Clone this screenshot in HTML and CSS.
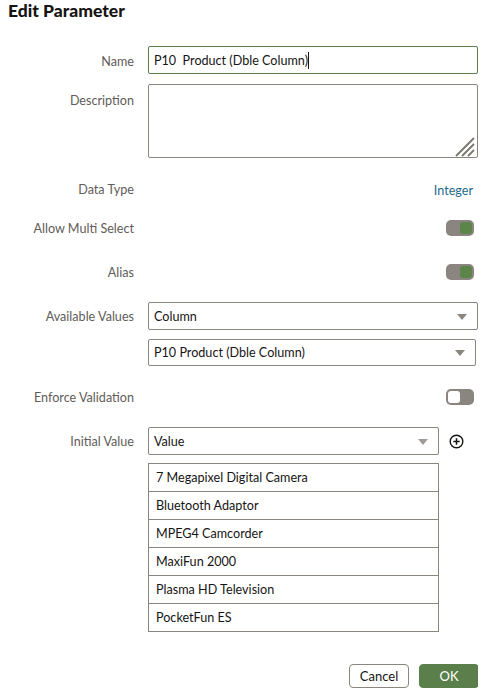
FILE: index.html
```html
<!DOCTYPE html>
<html lang="en">
<head>
<meta charset="utf-8">
<title>Edit Parameter</title>
<link rel="stylesheet" href="styles.css">
</head>
<body>
<h1 class="title">Edit Parameter</h1>
<div class="form">
  <div class="row row-name">
    <div class="lbl lbl-name">Name</div>
    <div class="input focused"><span class="txt">P10  Product (Dble Column)</span><span class="caret"></span></div>
  </div>
  <div class="row row-desc">
    <div class="lbl lbl-top">Description</div>
    <div class="textarea">
      <svg class="grip" width="22" height="22" viewBox="0 0 22 22">
        <path d="M21 3 L3 21 M21 9 L9 21 M21 15 L15 21" stroke="#7a756f" stroke-width="1.8" fill="none"/>
      </svg>
    </div>
  </div>
  <div class="row row-type">
    <div class="lbl">Data Type</div>
    <div class="static">Integer</div>
  </div>
  <div class="row row-multi">
    <div class="lbl">Allow Multi Select</div>
    <div class="switch on"><span class="knob"></span></div>
  </div>
  <div class="row row-alias">
    <div class="lbl">Alias</div>
    <div class="switch on"><span class="knob"></span></div>
  </div>
  <div class="row row-avail">
    <div class="lbl">Available Values</div>
    <div class="select"><span class="txt">Column</span><span class="arrow"></span></div>
  </div>
  <div class="row row-avail2">
    <div class="lbl"></div>
    <div class="select select-short"><span class="txt">P10 Product (Dble Column)</span><span class="arrow"></span></div>
  </div>
  <div class="row row-enforce">
    <div class="lbl">Enforce Validation</div>
    <div class="switch off"><span class="knob"></span></div>
  </div>
  <div class="row row-initial">
    <div class="lbl">Initial Value</div>
    <div class="initial-wrap">
      <div class="select select-init"><span class="txt">Value</span><span class="arrow"></span></div>
      <svg class="plus" width="15" height="15" viewBox="0 0 15 15">
        <circle cx="7.5" cy="7.5" r="6.3" stroke="#161513" stroke-width="1.4" fill="none"/>
        <path d="M7.5 4.3 V10.7 M4.3 7.5 H10.7" stroke="#161513" stroke-width="1.5"/>
      </svg>
    </div>
  </div>
  <div class="row row-list">
    <div class="lbl"></div>
    <ul class="list">
      <li>7 Megapixel Digital Camera</li>
      <li>Bluetooth Adaptor</li>
      <li>MPEG4 Camcorder</li>
      <li>MaxiFun 2000</li>
      <li>Plasma HD Television</li>
      <li>PocketFun ES</li>
    </ul>
  </div>
  <div class="buttons">
    <button class="btn btn-cancel">Cancel</button>
    <button class="btn btn-ok">OK</button>
  </div>
</div>
</body>
</html>
```
FILE: styles.css
```css
html, body {
  background: #ffffff;
}
body {
  margin: 0 7px 0 8px;
  font-family: Lato, "Noto Sans", Arial, sans-serif;
  font-size: 12.6px;
  color: #161513;
}
.title {
  margin: 0;
  height: 22px;
  font-family: Lato, "Noto Sans", Arial, sans-serif;
  font-weight: 900;
  font-size: 17.5px;
  line-height: 22px;
  color: #161513;
}
.form {
  display: flex;
  flex-direction: column;
}
.row {
  display: grid;
  grid-template-columns: 126px 1fr;
  column-gap: 14px;
  align-items: center;
}
.lbl {
  text-align: right;
  color: #5f5c59;
  line-height: 28px;
  padding-top: 2px;
  white-space: nowrap;
}
.lbl-name { padding-top: 4px; }
.lbl-top { align-self: start; padding-top: 3px; }

.row-name { margin-top: 22px; height: 28px; }
.row-desc { margin-top: 12px; height: 74px; align-items: start; }
.row-type { margin-top: 16px; height: 28px; }
.row-multi { margin-top: 11px; height: 28px; }
.row-alias { margin-top: 16px; height: 28px; }
.row-avail { margin-top: 16px; height: 28px; }
.row-avail2 { margin-top: 10px; height: 27px; }
.row-enforce { margin-top: 16px; height: 28px; }
.row-initial { margin-top: 16px; height: 28px; }
.row-list { margin-top: 9px; align-items: start; }

.input, .select, .textarea {
  box-sizing: border-box;
  border: 1px solid #8b8580;
  border-radius: 2px;
  background: #fff;
}
.input {
  height: 28px;
  display: flex;
  align-items: center;
  padding-left: 5px;
}
.input.focused {
  border-color: #5b7f4b;
}
.txt {
  white-space: pre;
  color: #161513;
}
.caret {
  display: inline-block;
  width: 1px;
  height: 17px;
  background: #161513;
}
.textarea {
  height: 74px;
  position: relative;
}
.grip {
  position: absolute;
  right: 2px;
  bottom: 0;
}
.static {
  justify-self: end;
  margin-right: 5px;
  margin-top: 2px;
  color: #1d6a8a;
}
.switch {
  justify-self: end;
  margin-right: 4px;
  width: 28px;
  height: 16px;
  border-radius: 5px;
  background: #8b8580;
  box-sizing: border-box;
  padding: 2px;
  display: flex;
}
.switch.on { justify-content: flex-end; }
.switch.off { justify-content: flex-start; }
.knob {
  width: 12px;
  height: 12px;
  border-radius: 3px;
  background: #5b8549;
}
.switch.off .knob { background: #ffffff; }

.select {
  height: 28px;
  display: flex;
  align-items: center;
  justify-content: space-between;
  padding: 0 10px 0 5px;
}
.select-short {
  height: 27px;
  margin-right: 2px;
}
.arrow {
  width: 0;
  height: 0;
  border-left: 5px solid transparent;
  border-right: 5px solid transparent;
  border-top: 6px solid #8b8580;
  margin-top: 1px;
}
.select-init .arrow { border-top-color: #a09b96; }
.initial-wrap {
  display: flex;
  align-items: center;
}
.select-init {
  width: 291px;
}
.plus {
  margin-left: 10px;
}
.list {
  list-style: none;
  margin: 0;
  padding: 0;
  width: 291px;
  box-sizing: border-box;
  border: 1px solid #8b8580;
}
.list li {
  height: 27px;
  line-height: 27px;
  padding-left: 7px;
  border-bottom: 1px solid #8b8580;
  color: #161513;
}
.list li:last-child {
  border-bottom: none;
}
.buttons {
  margin-top: 32px;
  display: flex;
  justify-content: flex-end;
  gap: 10px;
  margin-right: -1px;
}
.btn {
  width: 60px;
  height: 24px;
  border-radius: 4px;
  font-family: Lato, "Noto Sans", Arial, sans-serif;
  font-size: 13px;
  padding: 0;
  cursor: pointer;
}
.btn-cancel {
  background: #fff;
  border: 1px solid #8b8580;
  color: #161513;
}
.btn-ok {
  background: #5b7f4b;
  border: 1px solid #5b7f4b;
  color: #fff;
}
```
